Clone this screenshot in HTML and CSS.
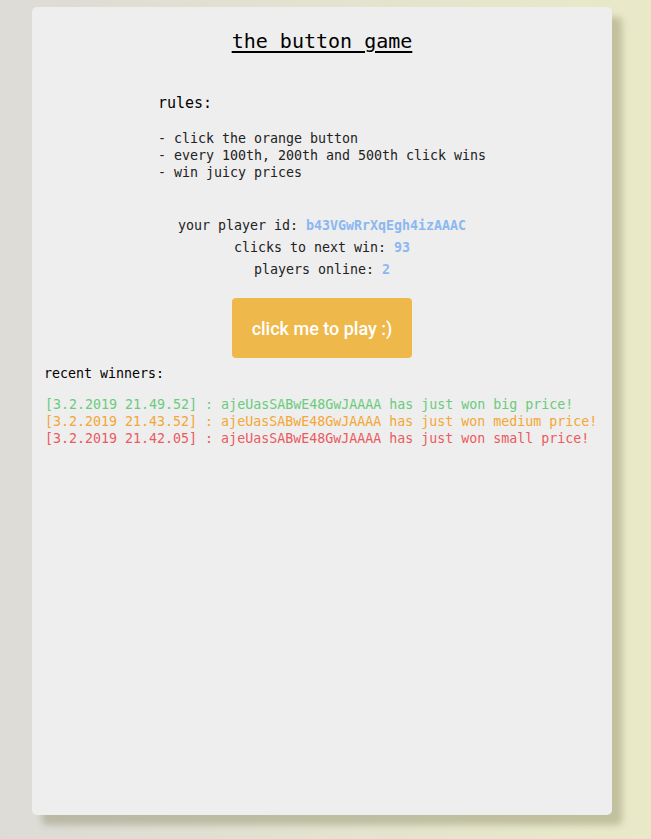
FILE: index.html
```html
<!DOCTYPE html>
<html>
<head>
<meta charset="utf-8">
<link rel="stylesheet" href="styles.css">
</head>
<body>
<div class="card">
  <h1 class="title">the button game</h1>
  <div class="rules-wrap">
    <div class="rules">
      <div class="rules-head">rules:</div>
      <div class="rules-list">
        <div>- click the orange button</div>
        <div>- every 100th, 200th and 500th click wins</div>
        <div>- win juicy prices</div>
      </div>
    </div>
  </div>
  <div class="stats">
    <div>your player id: <span class="val">b43VGwRrXqEgh4izAAAC</span></div>
    <div>clicks to next win: <span class="val">93</span></div>
    <div>players online: <span class="val">2</span></div>
  </div>
  <div class="btn-row"><button class="play">click me to play :)</button></div>
  <div class="winners-head">recent winners:</div>
  <div class="log">
    <div class="big">[3.2.2019 21.49.52] : ajeUasSABwE48GwJAAAA has just won big price!</div>
    <div class="medium">[3.2.2019 21.43.52] : ajeUasSABwE48GwJAAAA has just won medium price!</div>
    <div class="small">[3.2.2019 21.42.05] : ajeUasSABwE48GwJAAAA has just won small price!</div>
  </div>
</div>
</body>
</html>
```
FILE: styles.css
```css
html, body {
  margin: 0;
  padding: 0;
}
body {
  min-height: 839px;
  background: linear-gradient(to right, #dcdbd6 0%, #e2e2d0 45%, #e9e9c8 100%);
  font-family: "DejaVu Sans Mono", monospace;
  color: #111;
  padding-top: 7px;
  box-sizing: border-box;
}
.card {
  margin-left: 32px;
  width: 580px;
  height: 808px;
  box-sizing: border-box;
  background: #eeeeee;
  border-radius: 5px;
  box-shadow: 10px 10px 6px rgba(120, 120, 80, 0.35);
  padding: 22px 12px 0 12px;
}
.title {
  margin: 0;
  font-size: 20px;
  line-height: 24px;
  font-weight: normal;
  text-align: center;
  text-decoration: underline;
  text-underline-offset: 3px;
  text-decoration-thickness: 2px;
  color: #000;
}
.rules-wrap {
  text-align: center;
  margin-top: 41px;
}
.rules {
  display: inline-block;
  text-align: left;
}
.rules-head {
  font-size: 15px;
  line-height: 18px;
  color: #000;
}
.rules-list {
  margin-top: 18px;
  font-size: 13.3px;
  line-height: 17px;
  color: #222;
}
.stats {
  margin-top: 34px;
  text-align: center;
  font-size: 13.3px;
  line-height: 22px;
  color: #222;
}
.val {
  color: #8ab8f0;
  font-weight: bold;
}
.btn-row {
  margin-top: 17px;
  text-align: center;
}
.play {
  width: 180px;
  height: 60px;
  border: none;
  border-radius: 4px;
  background: #efb84a;
  color: #fff;
  font-family: Roboto, "Liberation Sans", Arial, sans-serif;
  font-weight: 500;
  font-size: 18px;
  padding: 0;
  vertical-align: top;
}
.winners-head {
  margin-top: 7px;
  font-size: 13.3px;
  line-height: 17px;
  color: #000;
}
.log {
  margin-top: 14px;
  padding-left: 1px;
  font-size: 13.3px;
  line-height: 17px;
  white-space: nowrap;
}
.big { color: #6acb7c; }
.medium { color: #f4a733; }
.small { color: #ea5b5e; }
```
